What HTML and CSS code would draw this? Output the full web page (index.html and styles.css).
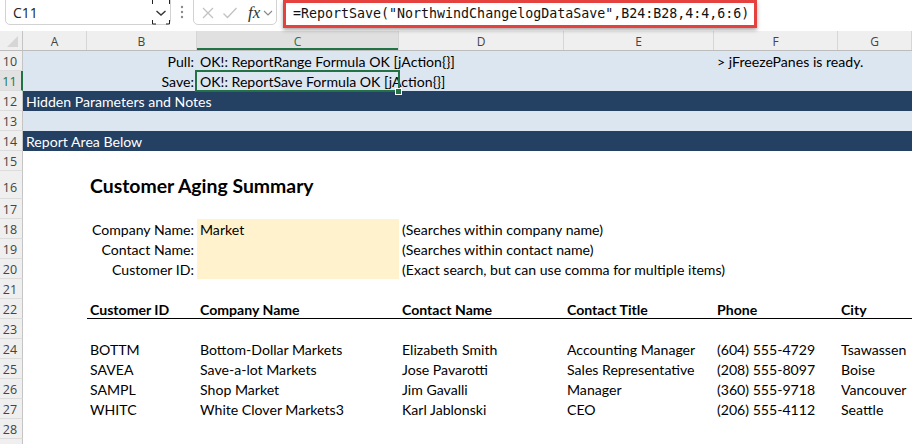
FILE: index.html
```html
<!DOCTYPE html>
<html lang="en">
<head>
<meta charset="utf-8">
<title>Customer Aging Summary</title>
<link rel="stylesheet" href="styles.css">
</head>
<body>
<div class="app">
  <div class="toolbar">
    <div class="namebox">
      <span class="nb-text">C11</span>
      <span class="nb-drop">
        <svg width="20" height="28" viewBox="0 0 20 28">
          <path d="M1.5 0 V7 M1.5 23 V27 H5 M18.5 0 V7 M18.5 23 V27 H15" fill="none" stroke="#222" stroke-width="1"/>
          <path d="M5.5 14 L10 18 L14.5 14" fill="none" stroke="#333" stroke-width="1.4"/>
        </svg>
      </span>
    </div>
    <div class="dots">
      <svg width="4" height="14" viewBox="0 0 4 14"><circle cx="2" cy="2" r="1.2" fill="#8a8a8a"/><circle cx="2" cy="7" r="1.2" fill="#8a8a8a"/><circle cx="2" cy="12" r="1.2" fill="#8a8a8a"/></svg>
    </div>
    <div class="fxbox">
      <svg class="ic" width="14" height="14" viewBox="0 0 14 14"><path d="M2 2 L12 12 M12 2 L2 12" stroke="#c2c2c2" stroke-width="1.3" fill="none"/></svg>
      <svg class="ic" width="16" height="14" viewBox="0 0 16 14"><path d="M1.5 7.5 L5.5 11.5 L14.5 2" stroke="#c2c2c2" stroke-width="1.3" fill="none"/></svg>
      <span class="fx">fx</span>
      <svg class="ic" width="10" height="8" viewBox="0 0 10 8"><path d="M1 2 L5 6 L9 2" stroke="#8a8a8a" stroke-width="1.2" fill="none"/></svg>
    </div>
    <div class="formula">=ReportSave("NorthwindChangelogDataSave",B24:B28,4:4,6:6)</div>
  </div>

  <div class="sheet">
    <div class="row hdr">
      <div class="rh corner"><span class="tri"></span></div>
      <div class="ch">A</div>
      <div class="ch">B</div>
      <div class="ch sel">C</div>
      <div class="ch">D</div>
      <div class="ch">E</div>
      <div class="ch">F</div>
      <div class="ch">G</div>
    </div>

    <div class="row band">
      <div class="rh">10</div>
      <div class="c"></div>
      <div class="c r">Pull:</div>
      <div class="c">OK!: ReportRange Formula OK [jAction{}]</div>
      <div class="c"></div>
      <div class="c"></div>
      <div class="c">&gt; jFreezePanes is ready.</div>
      <div class="c"></div>
    </div>
    <div class="row band">
      <div class="rh sel">11</div>
      <div class="c"></div>
      <div class="c r">Save:</div>
      <div class="c active">OK!: ReportSave Formula OK [jAction{}]</div>
      <div class="c"></div>
      <div class="c"></div>
      <div class="c"></div>
      <div class="c"></div>
    </div>
    <div class="row dark">
      <div class="rh">12</div>
      <div class="c">Hidden Parameters and Notes</div>
    </div>
    <div class="row band">
      <div class="rh">13</div>
      <div class="c"></div>
    </div>
    <div class="row dark">
      <div class="rh">14</div>
      <div class="c">Report Area Below</div>
    </div>
    <div class="row">
      <div class="rh">15</div>
    </div>
    <div class="row tall">
      <div class="rh">16</div>
      <div class="c"></div>
      <div class="c title">Customer Aging Summary</div>
    </div>
    <div class="row">
      <div class="rh">17</div>
    </div>
    <div class="row">
      <div class="rh">18</div>
      <div class="c"></div>
      <div class="c r">Company Name:</div>
      <div class="c input">Market</div>
      <div class="c">(Searches within company name)</div>
    </div>
    <div class="row">
      <div class="rh">19</div>
      <div class="c"></div>
      <div class="c r">Contact Name:</div>
      <div class="c input"></div>
      <div class="c">(Searches within contact name)</div>
    </div>
    <div class="row">
      <div class="rh">20</div>
      <div class="c"></div>
      <div class="c r">Customer ID:</div>
      <div class="c input"></div>
      <div class="c">(Exact search, but can use comma for multiple items)</div>
    </div>
    <div class="row">
      <div class="rh">21</div>
    </div>
    <div class="row">
      <div class="rh">22</div>
      <div class="c"></div>
      <div class="c th">Customer ID</div>
      <div class="c th">Company Name</div>
      <div class="c th">Contact Name</div>
      <div class="c th">Contact Title</div>
      <div class="c th">Phone</div>
      <div class="c th">City</div>
    </div>
    <div class="row">
      <div class="rh">23</div>
    </div>
    <div class="row">
      <div class="rh">24</div>
      <div class="c"></div>
      <div class="c">BOTTM</div>
      <div class="c">Bottom-Dollar Markets</div>
      <div class="c">Elizabeth Smith</div>
      <div class="c">Accounting Manager</div>
      <div class="c">(604) 555-4729</div>
      <div class="c">Tsawassen</div>
    </div>
    <div class="row">
      <div class="rh">25</div>
      <div class="c"></div>
      <div class="c">SAVEA</div>
      <div class="c">Save-a-lot Markets</div>
      <div class="c">Jose Pavarotti</div>
      <div class="c">Sales Representative</div>
      <div class="c">(208) 555-8097</div>
      <div class="c">Boise</div>
    </div>
    <div class="row">
      <div class="rh">26</div>
      <div class="c"></div>
      <div class="c">SAMPL</div>
      <div class="c">Shop Market</div>
      <div class="c">Jim Gavalli</div>
      <div class="c">Manager</div>
      <div class="c">(360) 555-9718</div>
      <div class="c">Vancouver</div>
    </div>
    <div class="row">
      <div class="rh">27</div>
      <div class="c"></div>
      <div class="c">WHITC</div>
      <div class="c">White Clover Markets3</div>
      <div class="c">Karl Jablonski</div>
      <div class="c">CEO</div>
      <div class="c">(206) 555-4112</div>
      <div class="c">Seattle</div>
    </div>
    <div class="row">
      <div class="rh">28</div>
    </div>
    <div class="row">
      <div class="rh"></div>
    </div>
  </div>
</div>
</body>
</html>
```

FILE: styles.css
```css
html, body {
  margin: 0;
  padding: 0;
  width: 912px;
  height: 444px;
  overflow: hidden;
  background: #fff;
}

.app {
  width: 912px;
  height: 444px;
  overflow: hidden;
  display: flex;
  flex-direction: column;
}

/* ---------- formula bar ---------- */
.toolbar {
  height: 31px;
  flex: none;
  display: flex;
  align-items: flex-start;
  background: #fff;
  font-family: "Open Sans", "Noto Sans", sans-serif;
}

.namebox {
  margin-left: 5px;
  margin-top: -4px;
  width: 166px;
  height: 29px;
  box-sizing: border-box;
  border: 1px solid #d2d2d2;
  border-radius: 5px;
  display: flex;
  align-items: center;
  padding-top: 4px;
}

.nb-text {
  flex: 1;
  padding-left: 7px;
  font-size: 14px;
  color: #222;
}

.nb-drop {
  width: 20px;
  height: 28px;
  margin-top: -4px;
  margin-right: -1px;
  display: flex;
}

.dots {
  width: 22px;
  height: 24px;
  display: flex;
  align-items: center;
  justify-content: center;
}

.fxbox {
  margin-top: -4px;
  width: 84px;
  height: 29px;
  box-sizing: border-box;
  border: 1px solid #d2d2d2;
  border-radius: 5px;
  display: flex;
  align-items: center;
  padding: 4px 0 0 7px;
}

.fxbox .ic:nth-child(1) { margin-right: 7px; }
.fxbox .ic:nth-child(2) { margin-right: 10px; }

.fx {
  font-family: "Liberation Serif", "DejaVu Serif", serif;
  font-style: italic;
  font-size: 17px;
  color: #333;
  margin-right: 3px;
  line-height: 1;
}

.formula {
  margin-left: 6px;
  width: 474px;
  height: 28px;
  box-sizing: border-box;
  border: 3px solid #e5413f;
  background: #fff;
  padding-left: 7px;
  font-family: "DejaVu Sans Mono", "Liberation Mono", monospace;
  font-size: 13.3px;
  line-height: 22px;
  color: #111;
  white-space: nowrap;
  box-shadow: 0 2px 4px rgba(0, 0, 0, 0.35);
  position: relative;
  z-index: 2;
}

/* ---------- sheet ---------- */
.sheet {
  flex: 1;
  font-family: "Lato", "Noto Sans", sans-serif;
  font-size: 14.1px;
  color: #000;
}

.row {
  display: grid;
  grid-template-columns: 23px 64px 110px 202px 165px 150px 124px 1fr;
  grid-template-rows: 20px;
  height: 20px;
}

.row.tall {
  height: 28px;
  grid-template-rows: 28px;
}

.rh {
  background: #efefef;
  border-right: 1px solid #c4c4c4;
  border-bottom: 1px solid #dcdcdc;
  box-sizing: border-box;
  font-family: "Open Sans", "Noto Sans", sans-serif;
  font-size: 12.5px;
  color: #444;
  text-align: center;
  line-height: 21px;
  padding-right: 2px;
  overflow: hidden;
}

.tall .rh { line-height: 33px; }

.rh.sel {
  background: #e2e2e2;
  color: #217346;
  border-right: 2px solid #217346;
}

/* column headers */
.hdr {
  background: #efefef;
  border-bottom: 1px solid #bdbdbd;
  box-sizing: border-box;
  grid-template-rows: 19px;
}

.hdr .rh {
  border-bottom: none;
  position: relative;
}

.corner .tri {
  position: absolute;
  right: 4px;
  bottom: 3px;
  width: 0;
  height: 0;
  border-left: 11px solid transparent;
  border-bottom: 11px solid #d6d6d6;
}

.ch {
  border-right: 1px solid #d6d6d6;
  font-family: "Open Sans", "Noto Sans", sans-serif;
  font-size: 12px;
  color: #444;
  text-align: center;
  line-height: 20px;
  padding-top: 1px;
  box-sizing: border-box;
  overflow: hidden;
}

.ch.sel {
  background: #e0e0e0;
  color: #217346;
  box-shadow: inset 0 -2px 0 #217346;
}

/* cells */
.c {
  padding: 0 3px;
  white-space: nowrap;
  line-height: 21px;
  min-width: 0;
  box-sizing: border-box;
}

.c.r {
  text-align: right;
}

.band { background: #dce6f1; }
.dark { background: #244062; }
.dark .c { color: #fff; }

.active {
  position: relative;
}

.active::after {
  content: "";
  position: absolute;
  left: -2px;
  right: -1px;
  top: -1px;
  height: 22px;
  box-sizing: border-box;
  border: 2px solid #217346;
}

.active::before {
  content: "";
  position: absolute;
  right: -3px;
  top: 17px;
  width: 5px;
  height: 5px;
  background: #217346;
  border: 1px solid #fff;
  z-index: 1;
}

.title {
  font-weight: 700;
  font-size: 19.4px;
  line-height: 30px;
}

.input { background: #fff2cc; }

.th {
  font-weight: 700;
  border-bottom: 1px solid #000;
}
```
